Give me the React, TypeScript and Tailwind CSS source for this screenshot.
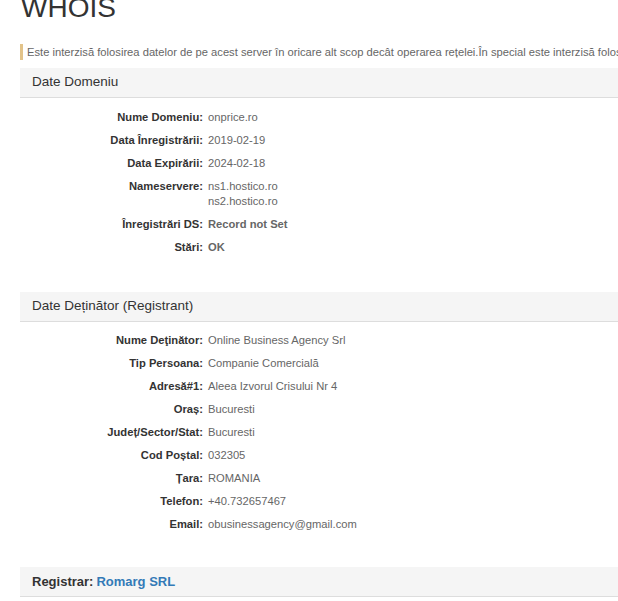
type Row = { label: string; value: string[]; strong?: boolean };

const domainRows: Row[] = [
  { label: "Nume Domeniu:", value: ["onprice.ro"] },
  { label: "Data Înregistrării:", value: ["2019-02-19"] },
  { label: "Data Expirării:", value: ["2024-02-18"] },
  { label: "Nameservere:", value: ["ns1.hostico.ro", "ns2.hostico.ro"] },
  { label: "Înregistrări DS:", value: ["Record not Set"], strong: true },
  { label: "Stări:", value: ["OK"], strong: true },
];

const ownerRows: Row[] = [
  { label: "Nume Deţinător:", value: ["Online Business Agency Srl"] },
  { label: "Tip Persoana:", value: ["Companie Comercială"] },
  { label: "Adresă#1:", value: ["Aleea Izvorul Crisului Nr 4"] },
  { label: "Oraș:", value: ["Bucuresti"] },
  { label: "Județ/Sector/Stat:", value: ["Bucuresti"] },
  { label: "Cod Poștal:", value: ["032305"] },
  { label: "Țara:", value: ["ROMANIA"] },
  { label: "Telefon:", value: ["+40.732657467"] },
  { label: "Email:", value: ["obusinessagency@gmail.com"] },
];

const Rows: React.FC<{ rows: Row[]; className: string }> = ({ rows, className }) => (
  <div className={className}>
    {rows.map((r, i) => (
      <div key={i} className="flex gap-[5px] py-[4px] text-[11.2px] leading-[15px]">
        <div className="w-[183px] shrink-0 text-right font-bold text-[#333]">
          {r.label}
        </div>
        <div className={r.strong ? "font-bold text-[#666]" : "text-[#666]"}>
          {r.value.map((v, j) => (
            <div key={j}>{v}</div>
          ))}
        </div>
      </div>
    ))}
  </div>
);

const SectionHeader: React.FC<{ children: React.ReactNode }> = ({ children }) => (
  <div className="h-[30px] bg-[#f5f5f5] border-b border-[#dddddd] pl-[12px] flex items-center text-[13.5px] text-[#333]">
    {children}
  </div>
);

export default function App() {
  return (
    <div
      className="w-[618px] h-[601px] overflow-hidden bg-white pl-[20px]"
      style={{ fontFamily: '"Liberation Sans", Arial, sans-serif' }}
    >
      <h1 className="mt-[-6px] h-[28px] text-[28px] leading-[28px] text-[#333] pl-[1px]">
        WHOIS
      </h1>
      <div className="mt-[22px] h-[16px] border-l-[3px] border-[#e2c38a] pl-[4px] flex items-center text-[11.2px] text-[#666] whitespace-nowrap">
        Este interzisă folosirea datelor de pe acest server în oricare alt scop decât operarea rețelei.În special este interzisă folosirea acestor date în scopuri comerciale.
      </div>
      <div className="mt-[8px]">
        <SectionHeader>Date Domeniu</SectionHeader>
        <Rows rows={domainRows} className="pt-[8px] pb-[33px]" />
        <SectionHeader>Date Deținător (Registrant)</SectionHeader>
        <Rows rows={ownerRows} className="pt-[7px] pb-[31px]" />
        <SectionHeader>
          <span className="font-bold text-[13px]">Registrar:</span>
          <span className="ml-[3px] font-bold text-[13px] text-[#337ab7]">Romarg SRL</span>
        </SectionHeader>
      </div>
    </div>
  );
}
